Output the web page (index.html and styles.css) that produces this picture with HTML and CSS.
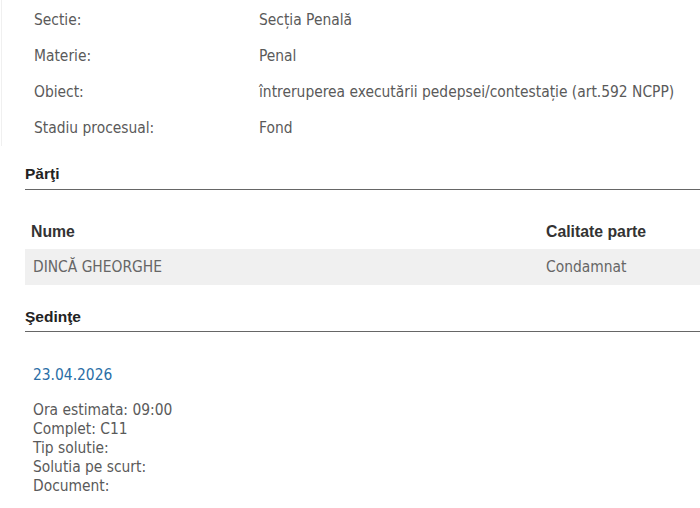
FILE: index.html
```html
<!DOCTYPE html>
<html lang="ro">
<head>
<meta charset="utf-8">
<link rel="stylesheet" href="styles.css">
</head>
<body>
<div class="page">
  <div class="details">
    <div class="row"><span class="label">Sectie:</span><span class="value">Secția Penală</span></div>
    <div class="row"><span class="label">Materie:</span><span class="value">Penal</span></div>
    <div class="row"><span class="label">Obiect:</span><span class="value">întreruperea executării pedepsei/contestație (art.592 NCPP)</span></div>
    <div class="row"><span class="label">Stadiu procesual:</span><span class="value">Fond</span></div>
  </div>

  <h3 class="section-title">Părţi</h3>
  <div class="parties">
    <div class="parties-head">
      <span class="col-name">Nume</span>
      <span class="col-role">Calitate parte</span>
    </div>
    <div class="parties-row">
      <span class="col-name">DINCĂ GHEORGHE</span>
      <span class="col-role">Condamnat</span>
    </div>
  </div>

  <h3 class="section-title section-title-tight">Şedinţe</h3>
  <div class="hearing">
    <div class="hearing-date">23.04.2026</div>
    <div class="hearing-info">
      <div>Ora estimata: 09:00</div>
      <div>Complet: C11</div>
      <div>Tip solutie:</div>
      <div>Solutia pe scurt:</div>
      <div>Document:</div>
    </div>
  </div>
</div>
</body>
</html>
```

FILE: styles.css
```css
html, body {
  margin: 0;
  padding: 0;
  background: #ffffff;
}

.page {
  padding-left: 25px;
  font-family: "DejaVu Sans", sans-serif;
  font-stretch: condensed;
  font-size: 15.4px;
  color: #5a5a5a;
}

.details {
  border-left: 1px solid #f0f0f0;
  margin-left: -24px;
  padding-left: 24px;
  padding-top: 2px;
}

.row {
  display: grid;
  grid-template-columns: 225px 1fr;
  padding-left: 8px;
  height: 36px;
  align-items: center;
}

.section-title {
  margin: 0;
  font-family: "Liberation Sans", Arial, sans-serif;
  font-stretch: normal;
  font-weight: bold;
  font-size: 15.5px;
  color: #222222;
  border-bottom: 1px solid #666666;
  padding-bottom: 6px;
}

.section-title-tight {
  padding-bottom: 5px;
}

.details + .section-title {
  margin-top: 19px;
}

.parties {
  padding-top: 33px;
  padding-bottom: 23px;
}

.parties-head,
.parties-row {
  display: grid;
  grid-template-columns: 515px 1fr;
}

.parties-head {
  font-family: "Liberation Sans", Arial, sans-serif;
  font-stretch: normal;
  font-weight: bold;
  font-size: 15.8px;
  color: #333333;
  padding: 0 0 8px 6px;
}

.parties-row {
  background: #f0f0f0;
  height: 36px;
  align-items: center;
  padding-left: 8px;
  color: #666666;
}

.parties-row .col-role {
  margin-left: -2px;
}

.hearing {
  padding: 34px 0 0 8px;
}

.hearing-date {
  color: #2a6ea6;
  font-size: 15.4px;
  margin-bottom: 17px;
}

.hearing-info {
  line-height: 19px;
}
```
